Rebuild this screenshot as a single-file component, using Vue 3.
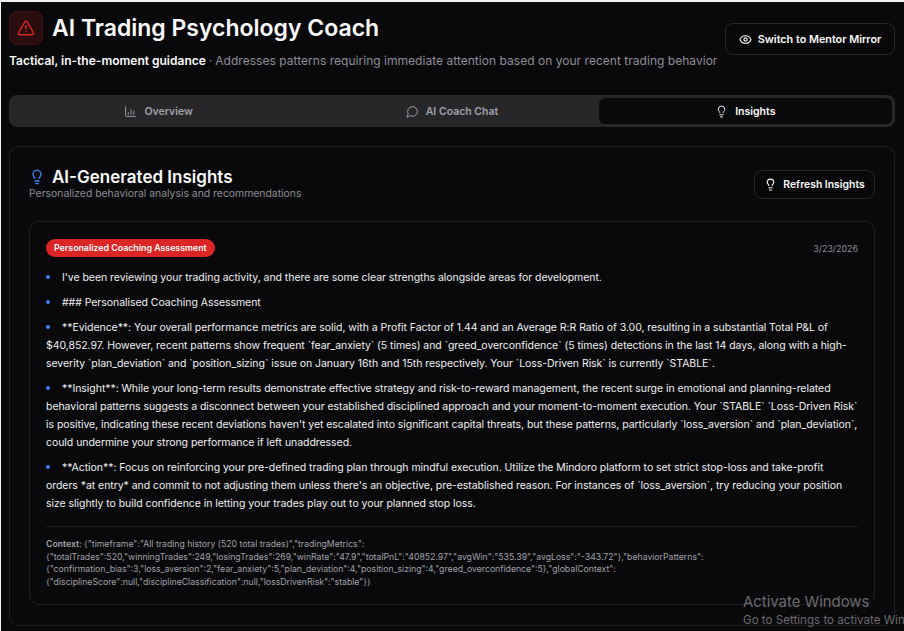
<script setup>
import { ref } from 'vue';

const activeTab = ref('insights');

const tabs = [
  { id: 'overview', label: 'Overview' },
  { id: 'chat', label: 'AI Coach Chat' },
  { id: 'insights', label: 'Insights' }
];

const paragraphs = [
  ["I've been reviewing your trading activity, and there are some clear strengths alongside areas for development."],
  ['### Personalised Coaching Assessment'],
  [
    '**Evidence**: Your overall performance metrics are solid, with a Profit Factor of 1.44 and an Average R:R Ratio of 3.00, resulting in a substantial Total P&L of',
    "$40,852.97. However, recent patterns show frequent `fear_anxiety` (5 times) and `greed_overconfidence` (5 times) detections in the last 14 days, along with a high-",
    'severity `plan_deviation` and `position_sizing` issue on January 16th and 15th respectively. Your `Loss-Driven Risk` is currently `STABLE`.'
  ],
  [
    '**Insight**: While your long-term results demonstrate effective strategy and risk-to-reward management, the recent surge in emotional and planning-related',
    'behavioral patterns suggests a disconnect between your established disciplined approach and your moment-to-moment execution. Your `STABLE` `Loss-Driven Risk`',
    "is positive, indicating these recent deviations haven't yet escalated into significant capital threats, but these patterns, particularly `loss_aversion` and `plan_deviation`,",
    'could undermine your strong performance if left unaddressed.'
  ],
  [
    '**Action**: Focus on reinforcing your pre-defined trading plan through mindful execution. Utilize the Mindoro platform to set strict stop-loss and take-profit',
    "orders *at entry* and commit to not adjusting them unless there's an objective, pre-established reason. For instances of `loss_aversion`, try reducing your position",
    'size slightly to build confidence in letting your trades play out to your planned stop loss.'
  ]
];

const contextLines = [
  '{"timeframe":"All trading history (520 total trades)","tradingMetrics":',
  '{"totalTrades":520,"winningTrades":249,"losingTrades":269,"winRate":"47.9","totalPnL":"40852.97","avgWin":"535.39","avgLoss":"-343.72"},"behaviorPatterns":',
  '{"confirmation_bias":3,"loss_aversion":2,"fear_anxiety":5,"plan_deviation":4,"position_sizing":4,"greed_overconfidence":5},"globalContext":',
  '{"disciplineScore":null,"disciplineClassification":null,"lossDrivenRisk":"stable"}}'
];
</script>

<template>
  <div class="page">
    <header class="header">
      <div class="header__left">
        <div class="title-row">
          <div class="alert-box">
            <svg width="18" height="18" viewBox="0 0 24 24" fill="none" stroke="#dc2626" stroke-width="2" stroke-linecap="round" stroke-linejoin="round">
              <path d="m21.73 18-8-14a2 2 0 0 0-3.48 0l-8 14A2 2 0 0 0 4 21h16a2 2 0 0 0 1.73-3" />
              <path d="M12 9v4" />
              <path d="M12 17h.01" />
            </svg>
          </div>
          <h1>AI Trading Psychology Coach</h1>
        </div>
        <p class="subtitle"><strong>Tactical, in-the-moment guidance</strong><span class="subtitle__sep">·</span><span class="subtitle__rest">Addresses patterns requiring immediate attention based on your recent trading behavior</span></p>
      </div>
      <button class="btn btn--mentor">
        <svg width="13" height="13" viewBox="0 0 24 24" fill="none" stroke="currentColor" stroke-width="2" stroke-linecap="round" stroke-linejoin="round">
          <path d="M2.06 12.35a1 1 0 0 1 0-.7 10.75 10.75 0 0 1 19.88 0 1 1 0 0 1 0 .7 10.75 10.75 0 0 1-19.88 0" />
          <circle cx="12" cy="12" r="3" />
        </svg>
        Switch to Mentor Mirror
      </button>
    </header>

    <nav class="tabs">
      <button
        v-for="tab in tabs"
        :key="tab.id"
        class="tab"
        :class="{ 'tab--active': activeTab === tab.id }"
        @click="activeTab = tab.id"
      >
        <svg v-if="tab.id === 'overview'" width="13" height="13" viewBox="0 0 24 24" fill="none" stroke="currentColor" stroke-width="1.75" stroke-linecap="round" stroke-linejoin="round">
          <path d="M3 3v16a2 2 0 0 0 2 2h16" />
          <path d="M8 17v-3" />
          <path d="M13 17V9" />
          <path d="M18 17v-6" />
        </svg>
        <svg v-else-if="tab.id === 'chat'" width="13" height="13" viewBox="0 0 24 24" fill="none" stroke="currentColor" stroke-width="1.75" stroke-linecap="round" stroke-linejoin="round">
          <path d="M7.9 20A9 9 0 1 0 4 16.1L2 22Z" />
        </svg>
        <svg v-else width="13" height="13" viewBox="0 0 24 24" fill="none" stroke="currentColor" stroke-width="1.75" stroke-linecap="round" stroke-linejoin="round">
          <path d="M15 14c.2-1 .7-1.7 1.5-2.5 1-.9 1.5-2.2 1.5-3.5A6 6 0 0 0 6 8c0 1 .2 2.2 1.5 3.5.7.7 1.3 1.5 1.5 2.5" />
          <path d="M9 18h6" />
          <path d="M10 22h4" />
        </svg>
        {{ tab.label }}
      </button>
    </nav>

    <section class="card">
      <div class="card__head">
        <div class="card__titles">
          <h2>
            <svg width="16" height="16" viewBox="0 0 24 24" fill="none" stroke="#3b82f6" stroke-width="2" stroke-linecap="round" stroke-linejoin="round">
              <path d="M15 14c.2-1 .7-1.7 1.5-2.5 1-.9 1.5-2.2 1.5-3.5A6 6 0 0 0 6 8c0 1 .2 2.2 1.5 3.5.7.7 1.3 1.5 1.5 2.5" />
              <path d="M9 18h6" />
              <path d="M10 22h4" />
            </svg>
            AI-Generated Insights
          </h2>
          <p class="card__desc">Personalized behavioral analysis and recommendations</p>
        </div>
        <button class="btn btn--refresh">
          <svg width="13" height="13" viewBox="0 0 24 24" fill="none" stroke="currentColor" stroke-width="2" stroke-linecap="round" stroke-linejoin="round">
            <path d="M15 14c.2-1 .7-1.7 1.5-2.5 1-.9 1.5-2.2 1.5-3.5A6 6 0 0 0 6 8c0 1 .2 2.2 1.5 3.5.7.7 1.3 1.5 1.5 2.5" />
            <path d="M9 18h6" />
            <path d="M10 22h4" />
          </svg>
          Refresh Insights
        </button>
      </div>

      <article class="insight">
        <div class="insight__top">
          <span class="badge">Personalized Coaching Assessment</span>
          <span class="date">3/23/2026</span>
        </div>
        <div class="insight__body">
          <p v-for="(para, i) in paragraphs" :key="i" class="para">
            <span v-for="(line, j) in para" :key="j" class="line">
              <span v-if="j === 0" class="dot"></span>{{ line }}
            </span>
          </p>
        </div>
        <div class="context">
          <span v-for="(line, i) in contextLines" :key="i" class="line">
            <strong v-if="i === 0">Context: </strong>{{ line }}
          </span>
        </div>
      </article>
    </section>

    <div class="activate">
      <div class="activate__title">Activate Windows</div>
      <div class="activate__sub">Go to Settings to activate Windows.</div>
    </div>
  </div>
</template>

<style>
html, body {
  margin: 0;
  background: #09090b;
  overflow: hidden;
}
</style>

<style scoped>
.page {
  position: relative;
  width: 904px;
  height: 631px;
  box-sizing: border-box;
  padding: 8px 9px 0 8px;
  border-top: 2px solid #f4f4f5;
  border-left: 1px solid #f4f4f5;
  background: #09090b;
  color: #fafafa;
  font-family: Inter, "Noto Sans", sans-serif;
  overflow: hidden;
}
.header {
  display: flex;
  justify-content: space-between;
  align-items: center;
  height: 68px;
}
.header__left {
  align-self: flex-start;
}
.title-row {
  display: flex;
  align-items: center;
  gap: 9px;
}
.alert-box {
  display: flex;
  align-items: center;
  justify-content: center;
  width: 34px;
  height: 34px;
  box-sizing: border-box;
  border: 1px solid #3f1113;
  border-radius: 8px;
  background: #2a0d0f;
}
h1 {
  margin: 0;
  font-size: 23px;
  font-weight: 600;
  line-height: 36px;
}
.subtitle {
  margin: 7px 0 0;
  font-size: 12px;
  line-height: 16px;
  color: #8e8e97;
}
.subtitle strong {
  color: #fafafa;
  font-weight: 600;
}
.subtitle__sep {
  margin: 0 3px;
}
.subtitle__rest {
  letter-spacing: 0.03px;
}
.btn {
  display: flex;
  align-items: center;
  justify-content: center;
  gap: 6px;
  box-sizing: border-box;
  border: 1px solid #27272a;
  border-radius: 8px;
  background: #09090b;
  color: #fafafa;
  font-family: inherit;
  font-weight: 600;
}
.btn--mentor {
  width: 170px;
  height: 32px;
  margin-top: -10px;
  font-size: 10.8px;
}
.btn--refresh {
  width: 121px;
  height: 29px;
  font-size: 10.4px;
}
.tabs {
  display: grid;
  grid-template-columns: repeat(3, 1fr);
  height: 32px;
  box-sizing: border-box;
  padding: 3px;
  margin-top: 17px;
  border-radius: 8px;
  background: #27272a;
}
.tab {
  display: flex;
  align-items: center;
  justify-content: center;
  gap: 7px;
  border: 0;
  border-radius: 6px;
  background: transparent;
  color: #a1a1aa;
  font-family: inherit;
  font-size: 10.5px;
  font-weight: 600;
}
.tab--active {
  background: #09090b;
  color: #fafafa;
}
.card {
  box-sizing: border-box;
  height: 480px;
  margin-top: 19px;
  padding: 17px 19px;
  border: 1px solid #1f1f23;
  border-radius: 10px;
}
.card__head {
  display: flex;
  justify-content: space-between;
  align-items: center;
  height: 37px;
  margin-top: 2px;
}
.card__titles {
  margin-top: -4px;
}
h2 {
  display: flex;
  align-items: center;
  gap: 7px;
  margin: 0;
  font-size: 17px;
  font-weight: 600;
  line-height: 22px;
}
.card__desc {
  margin: 0;
  font-size: 10.4px;
  line-height: 12px;
  color: #8e8e97;
}
.insight {
  box-sizing: border-box;
  height: 384px;
  margin-top: 18px;
  padding: 17px 16px 16px;
  border: 1px solid #1f1f23;
  border-radius: 10px;
}
.insight__top {
  display: flex;
  justify-content: space-between;
  align-items: center;
}
.badge {
  padding: 2px 8px;
  border-radius: 9px;
  background: #dc2626;
  color: #fafafa;
  font-size: 8.8px;
  line-height: 14px;
  font-weight: 600;
}
.date {
  font-size: 8.9px;
  color: #8e8e97;
}
.insight__body {
  margin-top: 12px;
}
.para {
  margin: 0 0 7px;
  font-size: 10.5px;
  letter-spacing: -0.05px;
  line-height: 18px;
  color: #f0f0f2;
}
.line {
  display: block;
  white-space: nowrap;
}
.dot {
  display: inline-block;
  width: 4px;
  height: 4px;
  margin: 0 12px 2px 0;
  border-radius: 50%;
  background: #3b82f6;
}
.context {
  margin-top: 13px;
  padding-top: 11px;
  border-top: 1px solid #1f1f23;
  font-size: 8.7px;
  line-height: 12.7px;
  color: #a1a1aa;
}
.context strong {
  font-weight: 600;
}
.activate {
  position: absolute;
  left: 742px;
  top: 591px;
  white-space: nowrap;
  color: #6b6b6f;
}
.activate__title {
  font-size: 14.9px;
  line-height: 18px;
}
.activate__sub {
  font-size: 11.6px;
  line-height: 18px;
}
</style>
